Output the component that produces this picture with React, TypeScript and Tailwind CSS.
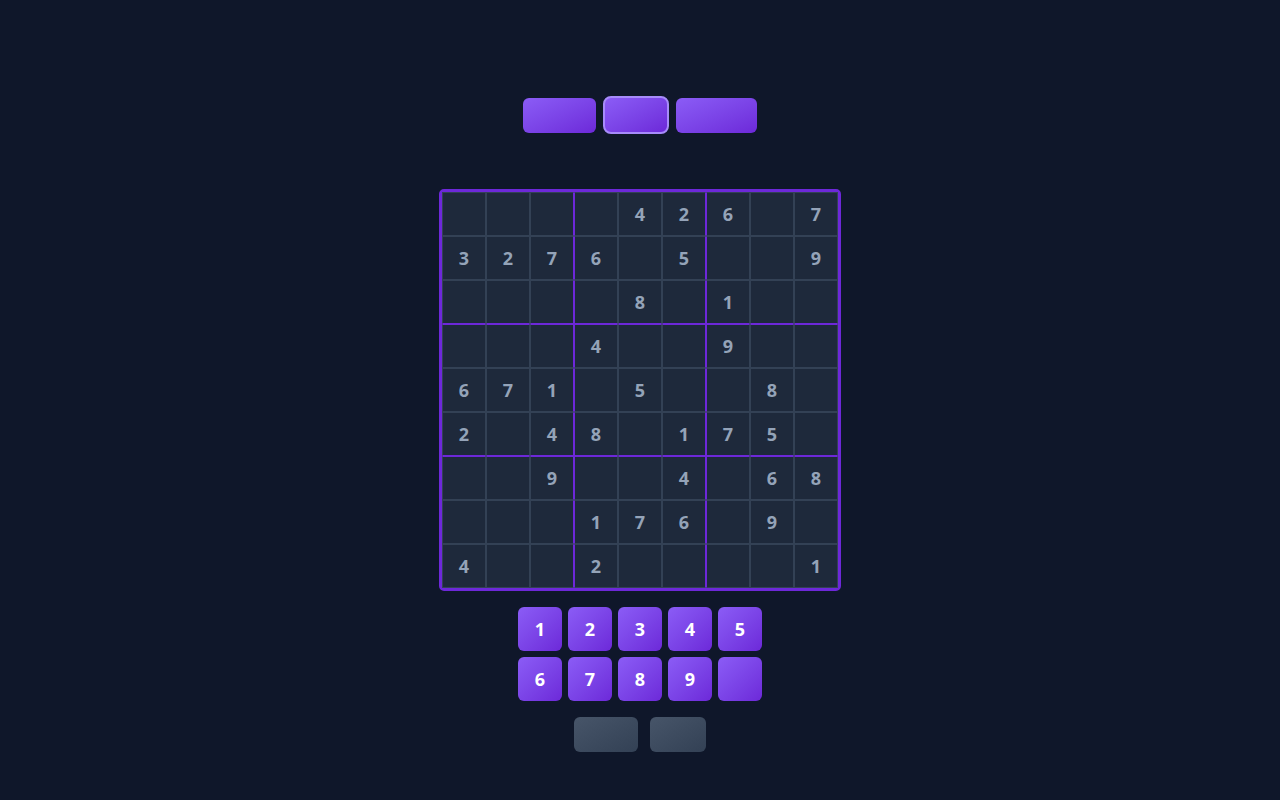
import React from 'react';

const BOARD: number[][] = [
  [0, 0, 0, 0, 4, 2, 6, 0, 7],
  [3, 2, 7, 6, 0, 5, 0, 0, 9],
  [0, 0, 0, 0, 8, 0, 1, 0, 0],
  [0, 0, 0, 4, 0, 0, 9, 0, 0],
  [6, 7, 1, 0, 5, 0, 0, 8, 0],
  [2, 0, 4, 8, 0, 1, 7, 5, 0],
  [0, 0, 9, 0, 0, 4, 0, 6, 8],
  [0, 0, 0, 1, 7, 6, 0, 9, 0],
  [4, 0, 0, 2, 0, 0, 0, 0, 1],
];

const font = { fontFamily: '"Open Sans", "Noto Sans", sans-serif' };

function cellClass(r: number, c: number) {
  const cls = ['w-11 h-11 flex items-center justify-center bg-[#1e293b] border border-[#334155] text-lg font-bold text-[#94a3b8]'];
  if (c === 2 || c === 5) cls.push('border-r-[#6d28d9]');
  if (c === 3 || c === 6) cls.push('border-l-[#6d28d9]');
  if (r === 2 || r === 5) cls.push('border-b-[#6d28d9]');
  if (r === 3 || r === 6) cls.push('border-t-[#6d28d9]');
  return cls.join(' ');
}

export default function App() {
  return (
    <div className="min-h-screen bg-[#0f172a] flex flex-col items-center pt-[96px]" style={font}>
      <div className="flex items-center gap-[7px] h-[38px]">
        <button className="w-[73px] h-[35px] rounded-md bg-gradient-to-br from-[#8b5cf6] to-[#6d28d9]" />
        <button className="w-[66px] h-[38px] rounded-lg border-2 border-[#a78bfa] bg-gradient-to-br from-[#8b5cf6] to-[#6d28d9]" />
        <button className="w-[81px] h-[35px] rounded-md bg-gradient-to-br from-[#8b5cf6] to-[#6d28d9]" />
      </div>

      <div className="mt-[55px] border-[3px] border-[#6d28d9] rounded-[5px] grid grid-cols-9">
        {BOARD.map((row, r) =>
          row.map((v, c) => (
            <div key={`${r}-${c}`} className={cellClass(r, c)}>
              {v ? v : ''}
            </div>
          ))
        )}
      </div>

      <div className="mt-4 grid grid-cols-5 gap-[6px]">
        {[1, 2, 3, 4, 5, 6, 7, 8, 9, 0].map((n) => (
          <button
            key={n}
            className="w-11 h-11 rounded-md bg-gradient-to-br from-[#8b5cf6] to-[#6d28d9] text-white text-lg font-bold flex items-center justify-center"
          >
            {n ? n : ''}
          </button>
        ))}
      </div>

      <div className="mt-4 flex gap-3">
        <button className="w-16 h-[35px] rounded-md bg-gradient-to-br from-[#475569] to-[#334155]" />
        <button className="w-14 h-[35px] rounded-md bg-gradient-to-br from-[#475569] to-[#334155]" />
      </div>
    </div>
  );
}
